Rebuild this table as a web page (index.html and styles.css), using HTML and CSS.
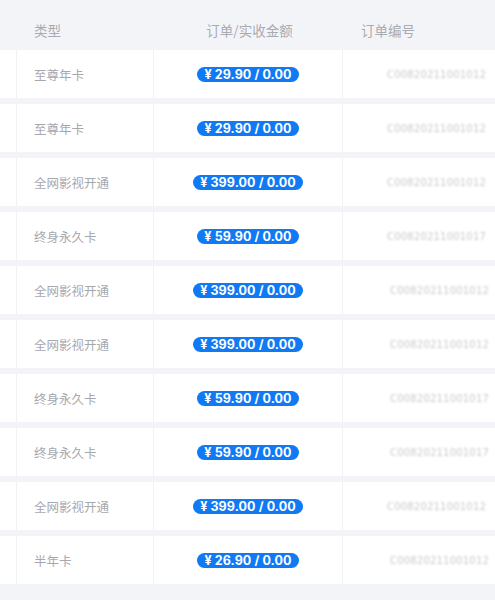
FILE: index.html
```html
<!DOCTYPE html>
<html lang="zh">
<head>
<meta charset="utf-8">
<link rel="stylesheet" href="styles.css">
</head>
<body>
<div class="table">
  <div class="row head">
    <div class="cell c0"></div>
    <div class="cell c1">类型</div>
    <div class="cell c2">订单/实收金额</div>
    <div class="cell c3">订单编号</div>
  </div>
  <div class="body">
    <div class="row"><div class="cell c0"></div><div class="cell c1">至尊年卡</div><div class="cell c2"><span class="badge">¥ 29.90 / 0.00</span></div><div class="cell c3"><span class="blur">C00820211001012</span></div></div>
    <div class="row"><div class="cell c0"></div><div class="cell c1">至尊年卡</div><div class="cell c2"><span class="badge">¥ 29.90 / 0.00</span></div><div class="cell c3"><span class="blur">C00820211001012</span></div></div>
    <div class="row"><div class="cell c0"></div><div class="cell c1">全网影视开通</div><div class="cell c2"><span class="badge">¥ 399.00 / 0.00</span></div><div class="cell c3"><span class="blur">C00820211001012</span></div></div>
    <div class="row"><div class="cell c0"></div><div class="cell c1">终身永久卡</div><div class="cell c2"><span class="badge">¥ 59.90 / 0.00</span></div><div class="cell c3"><span class="blur">C00820211001017</span></div></div>
    <div class="row"><div class="cell c0"></div><div class="cell c1">全网影视开通</div><div class="cell c2"><span class="badge">¥ 399.00 / 0.00</span></div><div class="cell c3 shift"><span class="blur">C00820211001012</span></div></div>
    <div class="row"><div class="cell c0"></div><div class="cell c1">全网影视开通</div><div class="cell c2"><span class="badge">¥ 399.00 / 0.00</span></div><div class="cell c3 shift"><span class="blur">C00820211001012</span></div></div>
    <div class="row"><div class="cell c0"></div><div class="cell c1">终身永久卡</div><div class="cell c2"><span class="badge">¥ 59.90 / 0.00</span></div><div class="cell c3 shift"><span class="blur">C00820211001017</span></div></div>
    <div class="row"><div class="cell c0"></div><div class="cell c1">终身永久卡</div><div class="cell c2"><span class="badge">¥ 59.90 / 0.00</span></div><div class="cell c3 shift"><span class="blur">C00820211001017</span></div></div>
    <div class="row"><div class="cell c0"></div><div class="cell c1">全网影视开通</div><div class="cell c2"><span class="badge">¥ 399.00 / 0.00</span></div><div class="cell c3"><span class="blur">C00820211001012</span></div></div>
    <div class="row"><div class="cell c0"></div><div class="cell c1">半年卡</div><div class="cell c2"><span class="badge">¥ 26.90 / 0.00</span></div><div class="cell c3 shift"><span class="blur">C00820211001012</span></div></div>
  </div>
</div>
</body>
</html>
```
FILE: styles.css
```css
html, body {
  margin: 0;
  padding: 0;
  background: #f3f4f8;
  overflow: hidden;
}
body {
  font-family: "Noto Sans CJK SC", "Noto Sans", sans-serif;
  width: 495px;
  height: 600px;
}
.table {
  width: 495px;
}
.body {
  display: flex;
  flex-direction: column;
  gap: 6px;
}
.row {
  display: grid;
  grid-template-columns: 17px 137px 189px 1fr;
  height: 48px;
  background: #fff;
}
.row.head {
  height: 50px;
  background: #f3f4f8;
}
.cell {
  display: flex;
  align-items: center;
  font-size: 12.5px;
  color: #a6a8b0;
  border-right: 1px solid #f1f2f5;
  overflow: hidden;
}
.head .cell {
  border-right: none;
  font-size: 13.5px;
  color: #a9abb3;
  padding-top: 10px;
}
.c1 {
  padding-left: 17px;
}
.c2 {
  justify-content: center;
}
.head .c2 {
  padding-left: 2px;
}
.c3 {
  padding-left: 44px;
  border-right: none;
}
.head .c3 {
  padding-left: 18px;
}
.c3.shift {
  padding-left: 47px;
}
.badge {
  display: inline-block;
  background: #0f7af3;
  color: #fff;
  font-family: "Inter", "Noto Sans", sans-serif;
  font-weight: 700;
  font-size: 12.5px;
  line-height: 15px;
  padding: 0 7px;
  border-radius: 8px;
  margin-top: 1px;
  letter-spacing: 0.1px;
}
.blur {
  font-family: "DejaVu Sans", sans-serif;
  font-size: 10px;
  color: #c9cacf;
  filter: blur(1px);
  letter-spacing: 0.2px;
  white-space: nowrap;
}
```
